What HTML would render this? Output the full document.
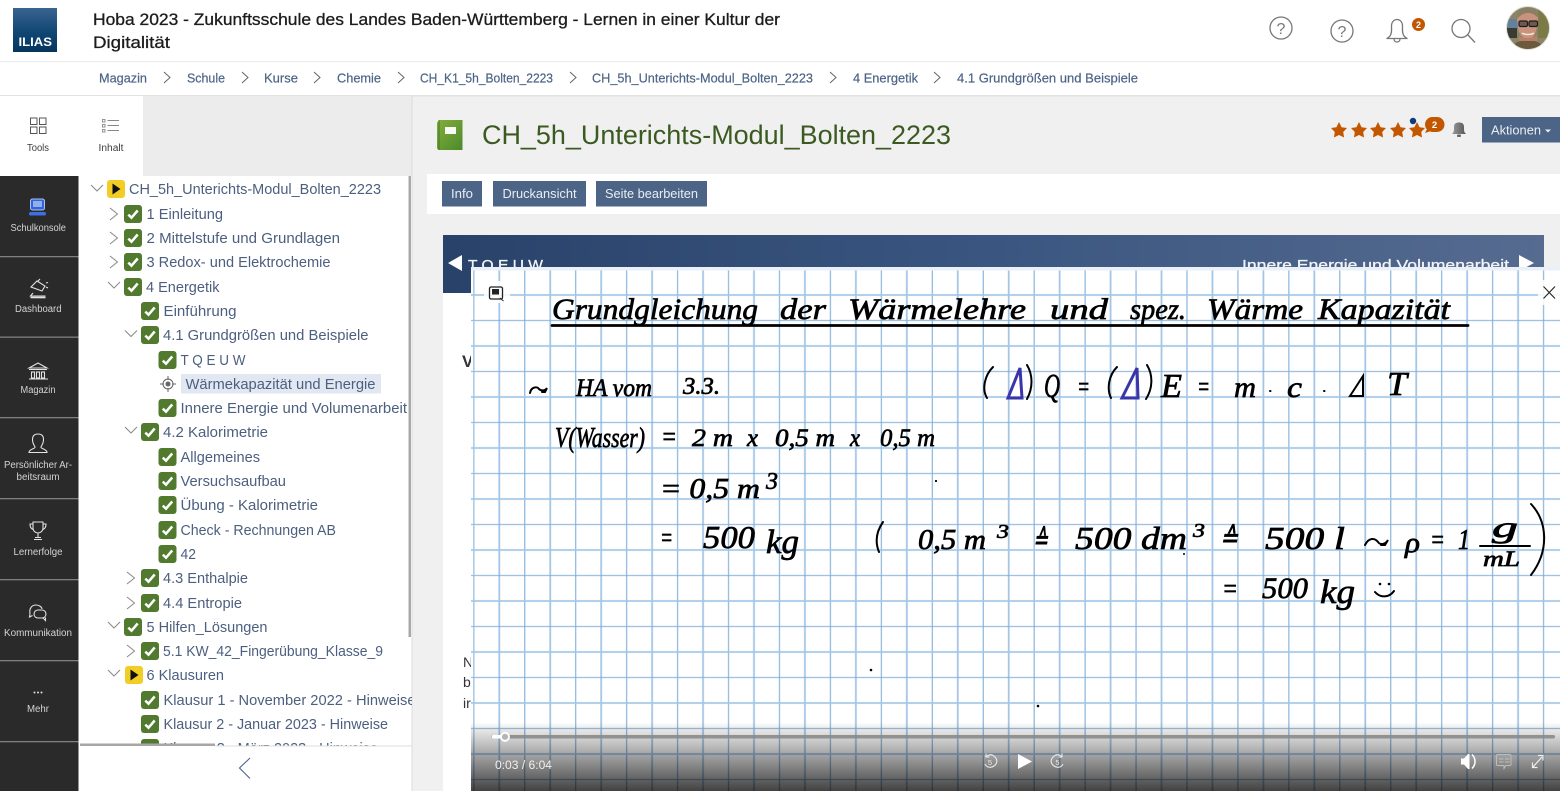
<!DOCTYPE html>
<html lang="de">
<head>
<meta charset="utf-8">
<title>CH_5h_Unterichts-Modul_Bolten_2223</title>
<style>
html,body{margin:0;padding:0;width:1560px;height:791px;overflow:hidden;background:#fff}
svg{display:block;font-family:"Liberation Sans",sans-serif}
.tr text{font-size:14.5px;fill:#4c5f7f}
.bc text{font-size:13px;fill:#4c6586;stroke:#4c6586;stroke-width:.2}
.sl text{font-size:10px;fill:#d4d4d4}
.btn text{font-size:12.5px;fill:#e9edf3}
.hw text{font-family:"Liberation Serif",serif;font-style:italic;fill:#000;stroke:#000;stroke-width:.7}
.ch{fill:none;stroke:#888;stroke-width:1}
.ic{fill:none;stroke:#e2e2e2;stroke-width:1.1}
.to{fill:none;stroke:#777;stroke-width:1.3}
</style>
</head>
<body>
<svg width="1560" height="791" viewBox="0 0 1560 791" xmlns="http://www.w3.org/2000/svg">
<defs>
<linearGradient id="lg" x1="0" y1="0" x2="0" y2="1"><stop offset="0" stop-color="#3a6491"/><stop offset=".55" stop-color="#104673"/><stop offset="1" stop-color="#06355f"/></linearGradient>
<linearGradient id="bn" x1="0" y1="0" x2="1" y2="0"><stop offset="0" stop-color="#29426a"/><stop offset=".5" stop-color="#3a5680"/><stop offset="1" stop-color="#566b90"/></linearGradient>
<linearGradient id="bk" x1="0" y1="0" x2="1" y2="1"><stop offset="0" stop-color="#84ad3d"/><stop offset="1" stop-color="#4c8a2b"/></linearGradient>
<linearGradient id="bl" x1="0" y1="0" x2="1" y2="0"><stop offset="0" stop-color="#999"/><stop offset="1" stop-color="#555"/></linearGradient>
<linearGradient id="vg" x1="0" y1="0" x2="0" y2="1"><stop offset="0" stop-color="#000" stop-opacity="0"/><stop offset=".12" stop-color="#000" stop-opacity=".1"/><stop offset="1" stop-color="#000" stop-opacity=".74"/></linearGradient>
<pattern id="grid" patternUnits="userSpaceOnUse" x="486.565" y="282.25" width="50.94" height="51">
<path d="M12.735 0V51" stroke="#a3c6e6" stroke-width="1.800" fill="none"/>
<path d="M38.205 0V51" stroke="#7fadd8" stroke-width="1.100" fill="none"/>
<path d="M0 12.75H50.94" stroke="#a3c6e6" stroke-width="1.800" fill="none"/>
<path d="M0 38.25H50.94" stroke="#7fadd8" stroke-width="1.100" fill="none"/>
</pattern>
<symbol id="c" viewBox="0 0 18 18"><rect width="18" height="18" rx="3" fill="#517a2e"/><path d="M4.3 9.6l3.2 3.1 6.2-7.2" stroke="#fff" stroke-width="2.5" fill="none"/></symbol>
<symbol id="y" viewBox="0 0 18 18"><rect width="18" height="18" rx="3" fill="#f2cd26"/><path d="M5.5 3.5l8 5.5-8 5.5z" fill="#111"/></symbol>
<symbol id="st" viewBox="0 0 16 16"><path d="M8 0L10.600 5.200 16 6 12.200 10 13.100 15.500 8 13 2.900 15.500 3.800 10 0 6 5.400 5.200z" fill="#c25700"/></symbol>
<clipPath id="tc"><rect x="79" y="176" width="333" height="570"/></clipPath>
<clipPath id="av"><circle cx="1528" cy="28" r="21"/></clipPath>
<clipPath id="bc"><rect x="443" y="235" width="1101" height="32"/></clipPath>
</defs>

<!-- page backgrounds -->
<rect x="412" y="96" width="1148" height="695" fill="#f0f0f0"/>
<rect x="427" y="174" width="1133" height="40" fill="#fff"/>
<rect x="443" y="293" width="100" height="498" fill="#fff"/>

<!-- header -->
<g>
<rect x="13" y="8" width="44" height="44" fill="url(#lg)"/>
<text x="18.500" y="46" font-size="12" font-weight="bold" fill="#fff" textLength="33.500" lengthAdjust="spacingAndGlyphs">ILIAS</text>
<g font-size="16.500" fill="#1c1c1c" stroke="#1c1c1c" stroke-width=".3">
<text x="93" y="25" textLength="687" lengthAdjust="spacingAndGlyphs">Hoba 2023 - Zukunftsschule des Landes Baden-Württemberg - Lernen in einer Kultur der</text>
<text x="93" y="48" textLength="77" lengthAdjust="spacingAndGlyphs">Digitalität</text>
</g>
<g class="to">
<circle cx="1281" cy="28" r="11"/><circle cx="1342" cy="31" r="11"/>
<path d="M1390 36c2-3 1.500-6 1.500-10 0-4 2.500-6.500 5.500-6.500s5.500 2.500 5.500 6.500c0 4-.5 7 1.500 10 1 1.500 3 2 3 2.500h-20c0-.5 2-1 3-2.500zM1394 39c0 4 6 4 6 0"/>
<circle cx="1461" cy="28.500" r="9"/><path d="M1468 35l7 7.500"/>
</g>
<g font-size="16" fill="#777" text-anchor="middle"><text x="1281" y="34">?</text><text x="1342" y="37">?</text></g>
<circle cx="1418.500" cy="24.500" r="6.500" fill="#c25700"/><text x="1418.500" y="28" font-size="9" font-weight="bold" fill="#fff" text-anchor="middle">2</text>
<circle cx="1528" cy="28" r="22" fill="#dfdfd6"/>
<g clip-path="url(#av)">
<rect x="1506" y="6" width="44" height="44" fill="#8a8566"/>
<rect x="1507" y="19" width="11" height="9" fill="#64809c"/>
<rect x="1507" y="28" width="10" height="10" fill="#3a3a34"/>
<rect x="1538" y="8" width="12" height="30" fill="#7c7a46"/>
<path d="M1510 52c1-9 10-12 18-12s16 4 18 12z" fill="#6c5a3e"/>
<path d="M1517 19c0-8 6-10 11-10s11 3 10 11l-1 6c-1 9-5 13-9 13s-9-3-10-12z" fill="#c9927c"/>
<path d="M1516 20c0-8 6-12 12-12s11 3 11 11c-4-5-8-6-11-6-4 0-8 2-12 7z" fill="#8c7e66"/>
<path d="M1519 36c4 3 14 3 18-1v6h-18z" fill="#b98069"/>
<rect x="1519" y="21" width="8.500" height="5.500" rx="1.500" fill="#6b5a52" stroke="#1c1c1c" stroke-width="1.200"/><rect x="1529" y="21" width="8.500" height="5.500" rx="1.500" fill="#6b5a52" stroke="#1c1c1c" stroke-width="1.200"/>
<path d="M1522 33c3 2 9 2 12 0" stroke="#f4e8dc" stroke-width="1.500" fill="none"/>
</g>
</g>
<rect x="0" y="61" width="1560" height="1.200" fill="#ededed"/>

<!-- breadcrumbs -->
<g class="bc">
<text x="99" y="82.500" textLength="48" lengthAdjust="spacingAndGlyphs">Magazin</text>
<text x="187" y="82.500" textLength="38" lengthAdjust="spacingAndGlyphs">Schule</text>
<text x="264" y="82.500" textLength="34" lengthAdjust="spacingAndGlyphs">Kurse</text>
<text x="337" y="82.500" textLength="44" lengthAdjust="spacingAndGlyphs">Chemie</text>
<text x="420" y="82.500" textLength="133" lengthAdjust="spacingAndGlyphs">CH_K1_5h_Bolten_2223</text>
<text x="592" y="82.500" textLength="221" lengthAdjust="spacingAndGlyphs">CH_5h_Unterichts-Modul_Bolten_2223</text>
<text x="853" y="82.500" textLength="65" lengthAdjust="spacingAndGlyphs">4 Energetik</text>
<text x="957" y="82.500" textLength="181" lengthAdjust="spacingAndGlyphs">4.1 Grundgrößen und Beispiele</text>
</g>
<g fill="none" stroke="#666" stroke-width="1">
<path d="M164 72l6 5.500-6 5.500M242 72l6 5.500-6 5.500M314 72l6 5.500-6 5.500M398 72l6 5.500-6 5.500M570 72l6 5.500-6 5.500M830 72l6 5.500-6 5.500M934 72l6 5.500-6 5.500"/>
</g>
<rect x="0" y="95" width="1560" height="1.500" fill="#e2e2e2"/>

<!-- slate -->
<rect x="0" y="96" width="79" height="80" fill="#fff"/>
<rect x="79" y="96" width="64" height="80" fill="#fff"/>
<rect x="143" y="96" width="269" height="80" fill="#ececec"/>
<rect x="79" y="176" width="333" height="615" fill="#fff"/>
<rect x="0" y="176" width="78.500" height="615" fill="#2a2a2a"/>
<rect x="411.500" y="96" width="1" height="695" fill="#dcdcdc"/>
<g fill="none" stroke="#555" stroke-width="1"><rect x="30.500" y="118" width="6.500" height="6.500"/><rect x="39.500" y="118" width="6.500" height="6.500"/><rect x="30.500" y="127" width="6.500" height="6.500"/><rect x="39.500" y="127" width="6.500" height="6.500"/></g>
<g fill="none" stroke="#888" stroke-width=".9"><rect x="102.500" y="119.500" width="2.500" height="2.500"/><rect x="102.500" y="124.500" width="2.500" height="2.500"/><rect x="102.500" y="129.500" width="2.500" height="2.500"/><path d="M107.500 120.500h11.500M107.500 125.500h11.500M107.500 130.500h11.500"/></g>
<g font-size="10" fill="#3c3c3c"><text x="27" y="151" textLength="22" lengthAdjust="spacingAndGlyphs">Tools</text><text x="98.500" y="151" textLength="25" lengthAdjust="spacingAndGlyphs">Inhalt</text></g>
<g fill="#7f7f7f"><rect y="256" width="78.500" height="1.300"/><rect y="336.500" width="78.500" height="1.300"/><rect y="417" width="78.500" height="1.300"/><rect y="498" width="78.500" height="1.300"/><rect y="579" width="78.500" height="1.300"/><rect y="660" width="78.500" height="1.300"/><rect y="741" width="78.500" height="1.300"/></g>
<g class="sl">
<text x="10.500" y="231" textLength="55.500" lengthAdjust="spacingAndGlyphs">Schulkonsole</text>
<text x="15" y="312" textLength="46.500" lengthAdjust="spacingAndGlyphs">Dashboard</text>
<text x="20.500" y="393" textLength="35" lengthAdjust="spacingAndGlyphs">Magazin</text>
<text x="4" y="468" textLength="68" lengthAdjust="spacingAndGlyphs">Persönlicher Ar-</text>
<text x="16.500" y="480" textLength="43" lengthAdjust="spacingAndGlyphs">beitsraum</text>
<text x="13.500" y="555" textLength="49" lengthAdjust="spacingAndGlyphs">Lernerfolge</text>
<text x="4" y="636" textLength="68" lengthAdjust="spacingAndGlyphs">Kommunikation</text>
<text x="27" y="712" textLength="22" lengthAdjust="spacingAndGlyphs">Mehr</text>
</g>
<!-- slate icons -->
<rect x="30.500" y="199" width="14" height="11" rx="2" fill="#3563d8" stroke="#a9c3f5" stroke-width="1"/><rect x="33" y="201" width="9" height="6" fill="#8fb0ee"/><rect x="29" y="212" width="17" height="3.500" rx="1.500" fill="#3f6fe0"/>
<g class="ic">
<path d="M31 287l6-6 8 5-3 5zM38 281l2-2M46 283l2-.5M46 287l2 1M33 293l-2.500 3h15"/><path d="M30.500 297.500h15" stroke-width="1.600"/>
<path d="M29 368l9-5 9 5zM29 369.500h18M29 379h19" /><rect x="31.500" y="372" width="3" height="6"/><rect x="36.500" y="372" width="3" height="6"/><rect x="41.500" y="372" width="3" height="6"/>
<path d="M29 452.500c0-3 5-3.500 6-5 .5-1-2.500-3-2.500-8 0-4 2.500-5.500 5.500-5.500s5.500 1.500 5.500 5.500c0 5-3 7-2.500 8 1 1.500 6 2 6 5z"/>
<path d="M33 522h10v6c0 3-2.500 5-5 5s-5-2-5-5zM33 524h-3c0 3 1 5 3.500 5.500M43 524h3c0 3-1 5-3.500 5.500M38 533v4M34 539.500h8M35 537.500h6"/>
<path d="M30 614c-1-6 2-9 6-9 3 0 6 2 6 4M30 614l-.5 3 3-1.500"/><rect x="34" y="610" width="12" height="8" rx="4"/><path d="M43 618l2.500 2.500v-3"/>
</g>
<g fill="#ddd"><circle cx="34.500" cy="692.500" r="1"/><circle cx="38" cy="692.500" r="1"/><circle cx="41.500" cy="692.500" r="1"/></g>

<!-- tree -->
<g class="tr" clip-path="url(#tc)">
<path class="ch" d="M91 185l6 6 6-6M110 208l7.500 6-7.500 6M110 232l7.500 6-7.500 6M110 256l7.500 6-7.500 6M108 282l6 6 6-6M125 330.500l6 6 6-6M125 427l6 6 6-6M127 572l7.500 6-7.500 6M127 597l7.500 6-7.500 6M108 622l6 6 6-6M127 645l7.500 6-7.500 6M108 670l6 6 6-6"/>
<use href="#y" x="107" y="180" width="18" height="18"/>
<use href="#c" x="124" y="205" width="18" height="18"/>
<use href="#c" x="124" y="229" width="18" height="18"/>
<use href="#c" x="124" y="253" width="18" height="18"/>
<use href="#c" x="124" y="278" width="18" height="18"/>
<use href="#c" x="141" y="302" width="18" height="18"/>
<use href="#c" x="141" y="326" width="18" height="18"/>
<use href="#c" x="158.500" y="351" width="18" height="18"/>
<g fill="none" stroke="#666" stroke-width="1"><circle cx="168" cy="384" r="5"/><path d="M168 376v4M168 388v4M160 384h4M172 384h4"/></g><circle cx="168" cy="384" r="2.500" fill="#666"/>
<use href="#c" x="158.500" y="399" width="18" height="18"/>
<use href="#c" x="141" y="423" width="18" height="18"/>
<use href="#c" x="158.500" y="448" width="18" height="18"/>
<use href="#c" x="158.500" y="472" width="18" height="18"/>
<use href="#c" x="158.500" y="496" width="18" height="18"/>
<use href="#c" x="158.500" y="521" width="18" height="18"/>
<use href="#c" x="158.500" y="545" width="18" height="18"/>
<use href="#c" x="141" y="569" width="18" height="18"/>
<use href="#c" x="141" y="594" width="18" height="18"/>
<use href="#c" x="124" y="618" width="18" height="18"/>
<use href="#c" x="141" y="642" width="18" height="18"/>
<use href="#y" x="125" y="666" width="18" height="18"/>
<use href="#c" x="141" y="691" width="18" height="18"/>
<use href="#c" x="141" y="715" width="18" height="18"/>
<use href="#c" x="141" y="739" width="18" height="18"/>
<rect x="181" y="374" width="200" height="19.500" fill="#e2e8f1"/>
<text x="129" y="194" textLength="252" lengthAdjust="spacingAndGlyphs">CH_5h_Unterichts-Modul_Bolten_2223</text>
<text x="146.500" y="219" textLength="76.500" lengthAdjust="spacingAndGlyphs">1 Einleitung</text>
<text x="146.500" y="243" textLength="193.500" lengthAdjust="spacingAndGlyphs">2 Mittelstufe und Grundlagen</text>
<text x="146.500" y="267" textLength="184" lengthAdjust="spacingAndGlyphs">3 Redox- und Elektrochemie</text>
<text x="146" y="292" textLength="73.500" lengthAdjust="spacingAndGlyphs">4 Energetik</text>
<text x="163.500" y="316" textLength="73" lengthAdjust="spacingAndGlyphs">Einführung</text>
<text x="163" y="340" textLength="205.500" lengthAdjust="spacingAndGlyphs">4.1 Grundgrößen und Beispiele</text>
<text x="180.500" y="365" textLength="65" lengthAdjust="spacingAndGlyphs">T Q E U W</text>
<text x="185.500" y="389" textLength="190" lengthAdjust="spacingAndGlyphs">Wärmekapazität und Energie</text>
<text x="180.500" y="413" textLength="226.500" lengthAdjust="spacingAndGlyphs">Innere Energie und Volumenarbeit</text>
<text x="163" y="437" textLength="105" lengthAdjust="spacingAndGlyphs">4.2 Kalorimetrie</text>
<text x="180.500" y="462" textLength="79.500" lengthAdjust="spacingAndGlyphs">Allgemeines</text>
<text x="180.500" y="486" textLength="105.500" lengthAdjust="spacingAndGlyphs">Versuchsaufbau</text>
<text x="180.500" y="510" textLength="137.500" lengthAdjust="spacingAndGlyphs">Übung - Kalorimetrie</text>
<text x="180.500" y="535" textLength="155.500" lengthAdjust="spacingAndGlyphs">Check - Rechnungen AB</text>
<text x="180.500" y="559" textLength="15.500" lengthAdjust="spacingAndGlyphs">42</text>
<text x="163" y="583" textLength="85" lengthAdjust="spacingAndGlyphs">4.3 Enthalpie</text>
<text x="163" y="608" textLength="79" lengthAdjust="spacingAndGlyphs">4.4 Entropie</text>
<text x="146.500" y="632" textLength="121" lengthAdjust="spacingAndGlyphs">5 Hilfen_Lösungen</text>
<text x="163" y="656" textLength="220" lengthAdjust="spacingAndGlyphs">5.1 KW_42_Fingerübung_Klasse_9</text>
<text x="146.500" y="680" textLength="77.500" lengthAdjust="spacingAndGlyphs">6 Klausuren</text>
<text x="163.500" y="705" textLength="252" lengthAdjust="spacingAndGlyphs">Klausur 1 - November 2022 - Hinweise</text>
<text x="163.500" y="729" textLength="224.500" lengthAdjust="spacingAndGlyphs">Klausur 2 - Januar 2023 - Hinweise</text>
<text x="163.500" y="753" textLength="214.500" lengthAdjust="spacingAndGlyphs">Klausur 3 - März 2023 - Hinweise</text>
</g>
<rect x="408.500" y="176" width="2.500" height="461" fill="#a8a8a8"/>
<rect x="80" y="743.500" width="135" height="2.500" fill="#a6a6a6"/>
<rect x="215" y="745.500" width="197" height="1" fill="#dedede"/>
<path d="M250 758l-10.500 10 10.500 10.500" fill="none" stroke="#4c6586" stroke-width="1.100"/>

<!-- content head -->
<path d="M437 122.500l3-2.500h22.500v30h-23c-1.500 0-2.500-1-2.500-2.500z" fill="url(#bk)"/>
<rect x="445" y="127" width="11" height="7" fill="#fff" opacity=".95"/><path d="M439 120v30" stroke="#3f7a20" stroke-width="1"/>
<text x="482" y="144" font-size="26.500" fill="#3b5a21" textLength="469" lengthAdjust="spacingAndGlyphs">CH_5h_Unterichts-Modul_Bolten_2223</text>
<use href="#st" x="1331" y="122" width="16" height="16"/><use href="#st" x="1351" y="122" width="16" height="16"/><use href="#st" x="1370" y="122" width="16" height="16"/><use href="#st" x="1390" y="122" width="16" height="16"/><use href="#st" x="1409" y="122" width="16" height="16"/>
<circle cx="1413" cy="121" r="3.200" fill="#0b3b78"/>
<rect x="1425" y="117" width="19.500" height="15" rx="7.500" fill="#c25700"/><path d="M1427 129l-2 4 6-2z" fill="#c25700"/>
<text x="1434.500" y="128" font-size="9.500" font-weight="bold" fill="#fff" text-anchor="middle">2</text>
<path d="M1452 134c2-2 2-3 2-7 0-3.500 2-4.500 5-4.500s5 1 5 4.500c0 4 0 5 2 7z" fill="url(#bl)"/><rect x="1457" y="134.500" width="4" height="2.500" rx="1" fill="#666"/>
<g class="btn">
<rect x="1482" y="117" width="78" height="25.500" fill="#4c6586"/>
<text x="1491" y="134.500" textLength="50" lengthAdjust="spacingAndGlyphs">Aktionen</text><path d="M1545 129.500h6l-3 3z" fill="#e9edf3"/>
<rect x="442" y="181" width="40" height="25.500" fill="#4c6586"/><text x="451" y="198" textLength="22" lengthAdjust="spacingAndGlyphs">Info</text>
<rect x="493" y="181" width="93" height="25.500" fill="#4c6586"/><text x="502.500" y="198" textLength="74" lengthAdjust="spacingAndGlyphs">Druckansicht</text>
<rect x="596" y="181" width="111" height="25.500" fill="#4c6586"/><text x="605" y="198" textLength="93" lengthAdjust="spacingAndGlyphs">Seite bearbeiten</text>
</g>

<!-- banner & page -->
<rect x="443" y="235" width="1101" height="58" fill="url(#bn)"/>
<path d="M462 255v16l-14-8z" fill="#fff"/><path d="M1519 255v16l15-8z" fill="#fff"/>
<g clip-path="url(#bc)" fill="#f2f4f7" font-size="15" stroke="#f2f4f7" stroke-width=".3">
<text x="468" y="270" textLength="75" lengthAdjust="spacingAndGlyphs">T Q E U W</text>
<text x="1242" y="270" textLength="267" lengthAdjust="spacingAndGlyphs">Innere Energie und Volumenarbeit</text>
</g>
<g font-size="14" fill="#333"><text x="462" y="367" font-weight="bold" font-size="17">V</text><text x="463" y="667">N</text><text x="463" y="687">b</text><text x="463" y="708">ir</text></g>

<!-- video -->
<rect x="471" y="267" width="1089" height="524" fill="#fff"/>
<rect x="471" y="267" width="1089" height="524" fill="url(#grid)"/>
<path d="M473.830 267V791" stroke="#a3c6e6" stroke-width=".8"/>
<rect x="471" y="267" width="1089" height="3.500" fill="#e9f0f8"/>
<g class="hw">
<g font-size="30">
<text x="552" y="319" textLength="206" lengthAdjust="spacingAndGlyphs">Grundgleichung</text>
<text x="780" y="319" textLength="46" lengthAdjust="spacingAndGlyphs">der</text>
<text x="848" y="319" textLength="178" lengthAdjust="spacingAndGlyphs">Wärmelehre</text>
<text x="1050" y="319" textLength="58" lengthAdjust="spacingAndGlyphs">und</text>
<text x="1130" y="319" textLength="56" lengthAdjust="spacingAndGlyphs">spez.</text>
<text x="1207" y="319" textLength="96" lengthAdjust="spacingAndGlyphs">Wärme</text>
<text x="1318" y="319" textLength="132" lengthAdjust="spacingAndGlyphs">Kapazität</text>
</g>
<g font-size="28">
<text x="576" y="396" font-size="25" textLength="76" lengthAdjust="spacingAndGlyphs">HA vom</text>
<text x="683" y="394" font-size="24" textLength="37" lengthAdjust="spacingAndGlyphs">3.3.</text>
<text x="555" y="447" textLength="90" lengthAdjust="spacingAndGlyphs">V(Wasser)</text>
<text x="661" y="446" textLength="16" lengthAdjust="spacingAndGlyphs">=</text>
<text x="692" y="446" font-size="25" textLength="41" lengthAdjust="spacingAndGlyphs">2 m</text>
<text x="747" y="446" font-size="25" textLength="11" lengthAdjust="spacingAndGlyphs">x</text>
<text x="775" y="446" font-size="25" textLength="60" lengthAdjust="spacingAndGlyphs">0,5 m</text>
<text x="850" y="446" font-size="25" textLength="10" lengthAdjust="spacingAndGlyphs">x</text>
<text x="880" y="446" font-size="25" textLength="55" lengthAdjust="spacingAndGlyphs">0,5 m</text>
<text x="660" y="498" textLength="100" lengthAdjust="spacingAndGlyphs">= 0,5 m</text>
<text x="766" y="489" font-size="24" textLength="12" lengthAdjust="spacingAndGlyphs">3</text>
<text x="660" y="547" textLength="13" lengthAdjust="spacingAndGlyphs">=</text>
<text x="703" y="548" font-size="32" textLength="52" lengthAdjust="spacingAndGlyphs">500</text>
<text x="766" y="553" font-size="34" textLength="33" lengthAdjust="spacingAndGlyphs">kg</text>
<text x="918" y="549" textLength="68" lengthAdjust="spacingAndGlyphs">0,5 m</text>
<text x="997" y="538" font-size="20" textLength="12" lengthAdjust="spacingAndGlyphs">3</text>
<text x="1033" y="549" textLength="15" lengthAdjust="spacingAndGlyphs">≙</text>
<text x="1075" y="549" font-size="32" textLength="112" lengthAdjust="spacingAndGlyphs">500 dm</text>
<text x="1193" y="537" font-size="20" textLength="12" lengthAdjust="spacingAndGlyphs">3</text>
<text x="1220" y="547" textLength="18" lengthAdjust="spacingAndGlyphs">≙</text>
<text x="1265" y="549" font-size="32" textLength="80" lengthAdjust="spacingAndGlyphs">500 l</text>
<text x="1405" y="552" textLength="15" lengthAdjust="spacingAndGlyphs">ρ</text>
<text x="1430" y="549" textLength="15" lengthAdjust="spacingAndGlyphs">=</text>
<text x="1458" y="549" textLength="12" lengthAdjust="spacingAndGlyphs">1</text>
<text x="1492" y="537" font-size="30" textLength="26" lengthAdjust="spacingAndGlyphs">g</text>
<text x="1483" y="566" font-size="22" textLength="37" lengthAdjust="spacingAndGlyphs">mL</text>
<text x="1222" y="598" textLength="16" lengthAdjust="spacingAndGlyphs">=</text>
<text x="1262" y="598" font-size="30" textLength="46" lengthAdjust="spacingAndGlyphs">500</text>
<text x="1320" y="603" font-size="34" textLength="35" lengthAdjust="spacingAndGlyphs">kg</text>
</g>
<g font-size="34">
<text x="1044" y="397" textLength="16" lengthAdjust="spacingAndGlyphs">Q</text>
<text x="1077" y="396" font-size="28" textLength="13" lengthAdjust="spacingAndGlyphs">=</text>
<text x="1161" y="397" textLength="21" lengthAdjust="spacingAndGlyphs">E</text>
<text x="1197" y="396" font-size="28" textLength="13" lengthAdjust="spacingAndGlyphs">=</text>
<text x="1234" y="397" font-size="30" textLength="22" lengthAdjust="spacingAndGlyphs">m</text>
<text x="1287" y="397" font-size="30" textLength="15" lengthAdjust="spacingAndGlyphs">c</text>
<text x="1387" y="395" textLength="20" lengthAdjust="spacingAndGlyphs">T</text>
</g>
</g>
<g fill="none" stroke="#000" stroke-width="2" stroke-linecap="round">
<path d="M552 325.500H1468" stroke-width="2.800"/>
<path d="M530 393c1-6 7-7 9-4 2 2 6 2 8-1l-2 4h-3"/>
<path d="M993 367c-9 9-11 23-6 31M1027 365c6 10 6 23 0 34M1117 367c-9 9-10 23-6 31M1147 365c6 10 6 23-1 34M1350 396l13-20v20zM1270 391h.5M1324 391h.5"/>
<path d="M883 522c-7 10-8 20-4 30M1531 504c16 17 19 46 0 71M1365 545c4-8 10-7 13-3 2 3 7 3 10-2l-3 5h-4M1480 546h50M1375 592c5 6 14 6 19-1"/>
</g>
<g fill="#000"><circle cx="1380" cy="584" r="1.300"/><circle cx="1389" cy="584" r="1.300"/><circle cx="936" cy="481" r="1.100"/><circle cx="871" cy="670" r="1.300"/><circle cx="1038" cy="706" r="1.300"/><circle cx="1184" cy="554" r="1"/></g>
<path d="M1008 398l12-30 2 30zM1122 398l15-30 1 30z" fill="none" stroke="#3a35a8" stroke-width="3"/>
<!-- video overlays -->
<rect x="484" y="281" width="26" height="22" fill="#fff" opacity=".85"/>
<rect x="489.500" y="287" width="13" height="12" rx="1.500" fill="none" stroke="#222" stroke-width="1.300"/><rect x="492" y="289" width="7" height="5.500" fill="#222"/><path d="M500 298l3.500 3" stroke="#222" stroke-width="1"/>
<rect x="1538" y="280" width="22" height="25" fill="#fff" opacity=".85"/>
<path d="M1543.500 286.500l11.500 12M1555 286.500l-11.500 12" stroke="#222" stroke-width="1.100"/>
<rect x="471" y="722" width="1089" height="69" fill="url(#vg)"/>
<rect x="491" y="735" width="1064" height="3.500" rx="1.700" fill="#8a8a8a" opacity=".9"/>
<rect x="491.500" y="735" width="11" height="3.500" rx="1.700" fill="#fff"/>
<circle cx="505" cy="736.800" r="4" fill="#b5b5b5" stroke="#fff" stroke-width="1.800"/>
<text x="495" y="769" font-size="11.500" fill="#f0f0f0" textLength="57" lengthAdjust="spacingAndGlyphs">0:03 / 6:04</text>
<g fill="none" stroke="#e8e8e8" stroke-width="1.100"><path d="M986 757c3-3 6-3 9 0 3 3 2 7-1 9s-7 2-9-2M986 753.500v3.500h3.500"/><path d="M1062 757c-3-3-6-3-9 0-3 3-2 7 1 9s7 2 9-2M1062 753.500v3.500h-3.500"/></g>
<text x="990" y="765" font-size="7.500" fill="#e8e8e8" text-anchor="middle">5</text><text x="1057.500" y="765" font-size="7.500" fill="#e8e8e8" text-anchor="middle">5</text>
<path d="M1018 754l14 7.500-14 7.500z" fill="#fff"/>
<path d="M1461 758.500h3l4-4.500h1.500v15h-1.500l-4-4.500h-3z" fill="#fff"/><path d="M1472 754.500c4 4 4 10 0 14" fill="none" stroke="#fff" stroke-width="1.500"/>
<path d="M1497.500 754.500h12.500a1 1 0 0 1 1 1v9a1 1 0 0 1-1 1h-4l-2 3v-3h-6.500a1 1 0 0 1-1-1v-9a1 1 0 0 1 1-1zM1499 759h4.500M1505 759h4.500M1499 762h4.500M1505 762h4.500" fill="none" stroke="#bdbdbd" stroke-width="1"/>
<path d="M1533 767l9-10M1538 755.500h5v5M1532.500 762.500v5h5" fill="none" stroke="#eee" stroke-width="1.200"/>
</svg>
</body>
</html>
